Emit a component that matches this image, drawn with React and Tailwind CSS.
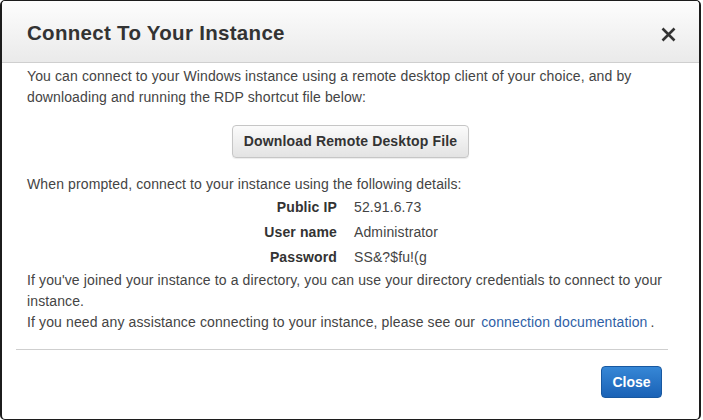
export default function App() {
  return (
    <div className="w-[703px] h-[420px] bg-white" style={{ fontFamily: '"Liberation Sans", Arial, sans-serif' }}>
      <div className="w-[701px] h-[420px] border-t border-b border-l-2 border-r-2 border-[#1c1c1c] rounded-[5px] overflow-hidden flex flex-col bg-white">
        <div className="h-[62px] shrink-0 flex items-center justify-between pl-[25px] pr-[23px] border-b border-[#cfcfcf] bg-gradient-to-b from-[#fdfdfd] to-[#eaeaea]">
          <h1 className="text-[20.5px] font-bold text-[#333] leading-none mt-[4px] tracking-[0.3px]">Connect To Your Instance</h1>
          <svg width="15" height="15" viewBox="0 0 15 15" className="mt-[6px]">
            <path d="M1.5 1.5 L13.5 13.5 M13.5 1.5 L1.5 13.5" stroke="#333" strokeWidth="2.6" strokeLinecap="butt" />
          </svg>
        </div>
        <div className="px-[25px] pt-[3px] text-[14px] leading-[21px] text-[#444] tracking-[0.12px]">
          <p>You can connect to your Windows instance using a remote desktop client of your choice, and by downloading and running the RDP shortcut file below:</p>
          <div className="flex justify-center mt-[17px]">
            <button className="h-[33px] px-[11px] rounded-[4px] border border-[#c6c6c6] bg-gradient-to-b from-[#fbfbfb] to-[#e3e3e3] text-[14px] font-bold text-[#333] tracking-[0.15px] shadow-[0_1px_1px_rgba(0,0,0,0.08)]">
              Download Remote Desktop File
            </button>
          </div>
          <p className="mt-[16px]">When prompted, connect to your instance using the following details:</p>
          <div className="grid grid-cols-[310px_1fr] gap-x-[17px]">
            <div className="h-[25px] flex items-center justify-end font-bold text-[#333]">Public IP</div>
            <div className="h-[25px] flex items-center">52.91.6.73</div>
            <div className="h-[25px] flex items-center justify-end font-bold text-[#333]">User name</div>
            <div className="h-[25px] flex items-center">Administrator</div>
            <div className="h-[25px] flex items-center justify-end font-bold text-[#333]">Password</div>
            <div className="h-[25px] flex items-center">SS&amp;?$fu!(g</div>
          </div>
          <p className="pr-[10px]">If you've joined your instance to a directory, you can use your directory credentials to connect to your instance.</p>
          <p>
            If you need any assistance connecting to your instance, please see our{' '}
            <a className="text-[#2f5fa6] ml-[2px]">connection documentation</a>
            <span className="ml-[3px]">.</span>
          </p>
        </div>
        <div className="ml-[14px] mr-[31px] mt-[16px] border-t border-[#cfcfcf] flex justify-end pt-[16px] pr-[6px]">
          <button className="h-[32px] w-[61px] rounded-[4px] border border-[#1858a0] bg-gradient-to-b from-[#3687d6] to-[#1a62b6] text-white text-[14px] font-bold">
            Close
          </button>
        </div>
      </div>
    </div>
  );
}
